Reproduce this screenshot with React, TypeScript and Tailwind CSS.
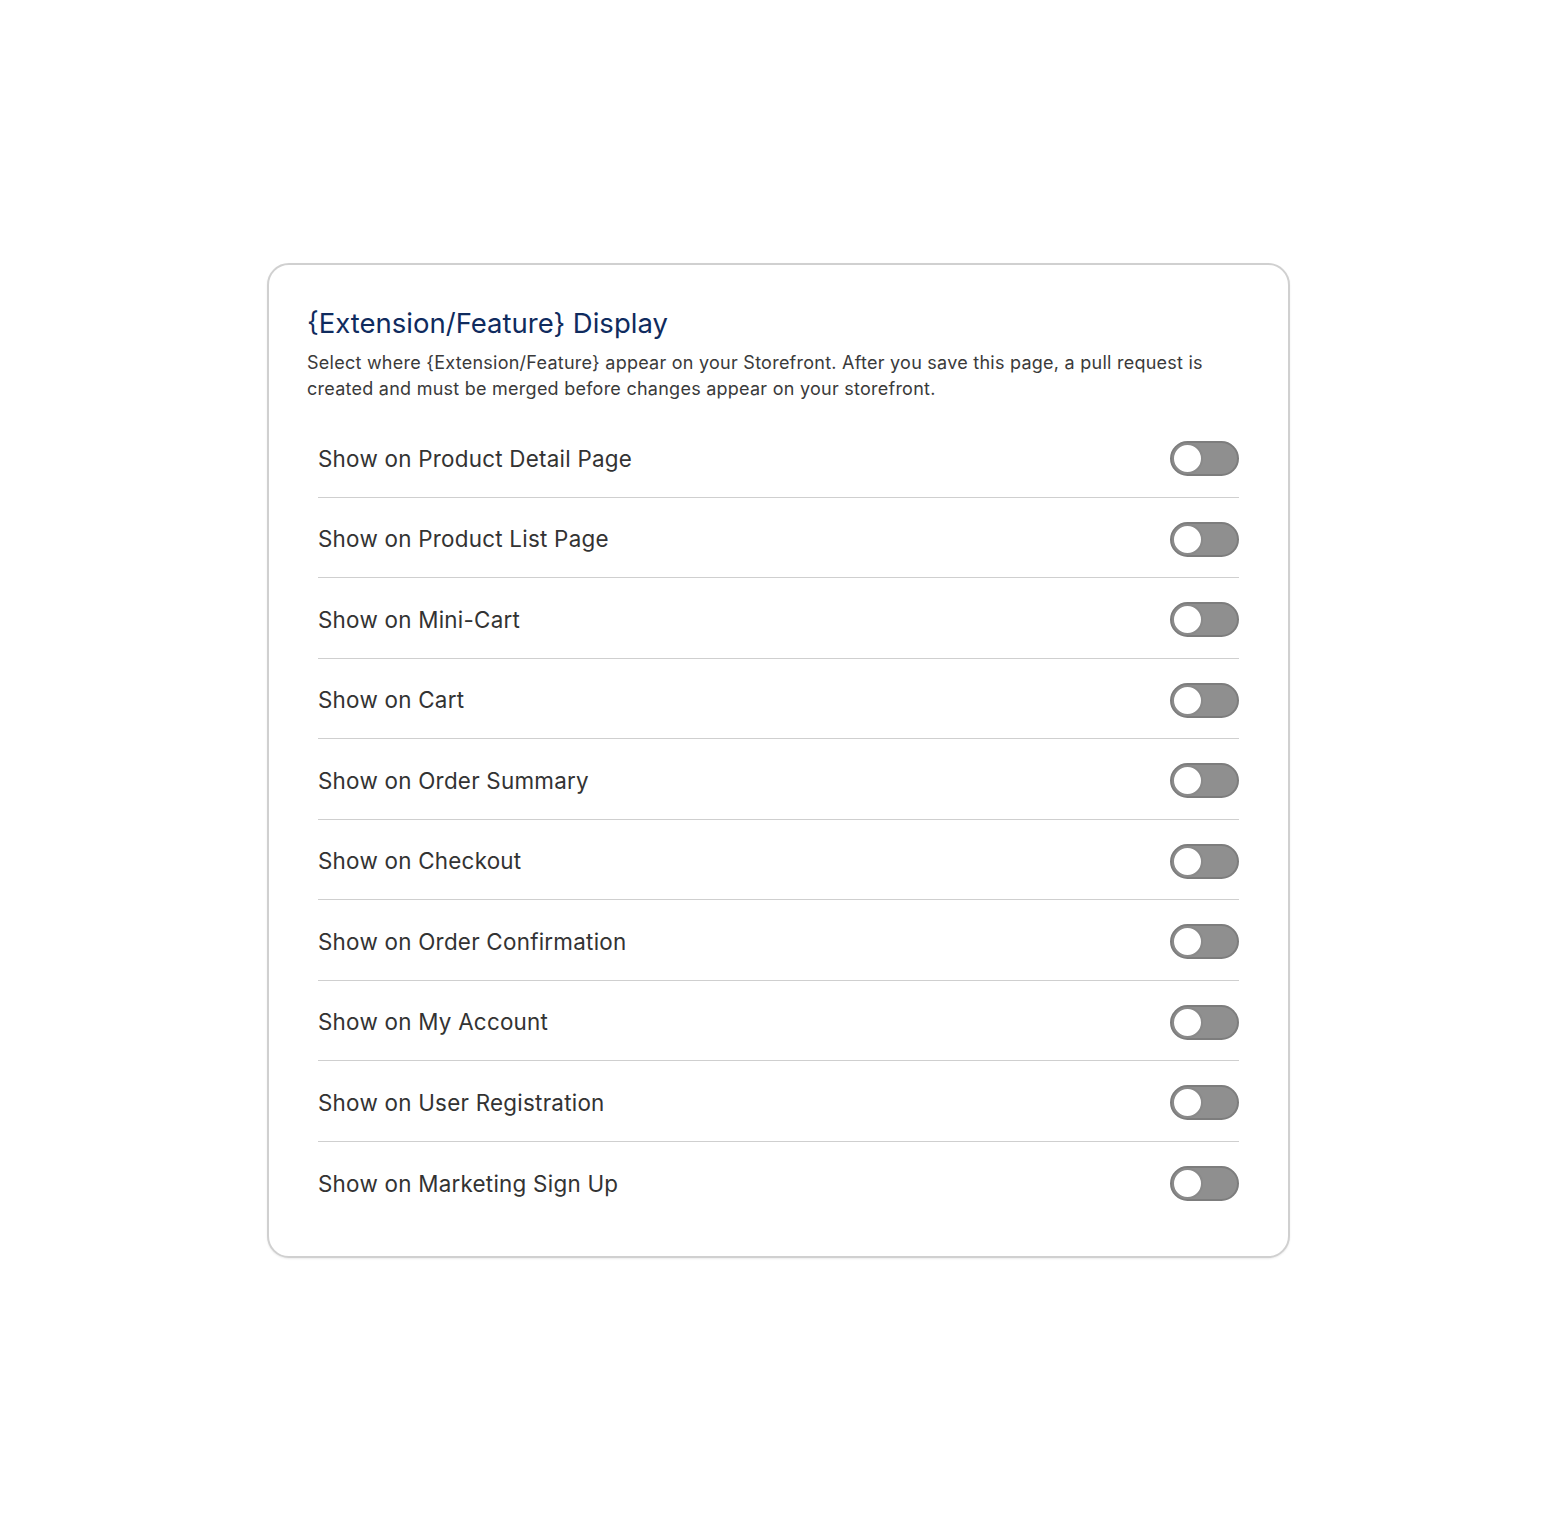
import React from "react";

const placements = [
  "Show on Product Detail Page",
  "Show on Product List Page",
  "Show on Mini-Cart",
  "Show on Cart",
  "Show on Order Summary",
  "Show on Checkout",
  "Show on Order Confirmation",
  "Show on My Account",
  "Show on User Registration",
  "Show on Marketing Sign Up",
];

function Toggle({ label }: { label: string }) {
  return (
    <button
      type="button"
      role="switch"
      aria-checked={false}
      aria-label={label}
      className="relative h-[35px] w-[69px] shrink-0 rounded-full border-2 border-[#7d7d7d] bg-[#8f8f8f]"
    >
      <span className="absolute left-0 top-0 h-[31px] w-[31px] rounded-full border-2 border-[#8a8a8a] bg-white" />
    </button>
  );
}

export default function App() {
  return (
    <div
      className="min-h-[1528px] w-full bg-white pt-[263px]"
      style={{ fontFamily: "Inter, 'Noto Sans', 'Liberation Sans', sans-serif" }}
    >
      <div className="mx-auto w-[1023px] rounded-[22px] border-2 border-[#d0d0d0] bg-white px-[38px] pb-[34px] pt-[41px] shadow-[0_1px_2px_rgba(0,0,0,0.08)]">
        <h2 className="text-[27.5px] leading-[34px] text-[#0f2b5e]">
          {"{Extension/Feature} Display"}
        </h2>
        <p className="mt-[10px] pr-[40px] text-[18px] leading-[26px] tracking-[0.25px] text-[#3a3a3a]">
          {
            "Select where {Extension/Feature} appear on your Storefront. After you save this page, a pull request is created and must be merged before changes appear on your storefront."
          }
        </p>
        <ul className="mx-[11px] mt-[15px]">
          {placements.map((label, i) => (
            <li
              key={label}
              className={
                i < placements.length - 1
                  ? "flex h-[80.5px] items-center justify-between border-b border-[#cfcfcf] pt-[4px]"
                  : "flex h-[80.5px] items-center justify-between pt-[4px]"
              }
            >
              <span className="text-[22.4px] tracking-[0.25px] text-[#333333]">{label}</span>
              <Toggle label={label} />
            </li>
          ))}
        </ul>
      </div>
    </div>
  );
}
